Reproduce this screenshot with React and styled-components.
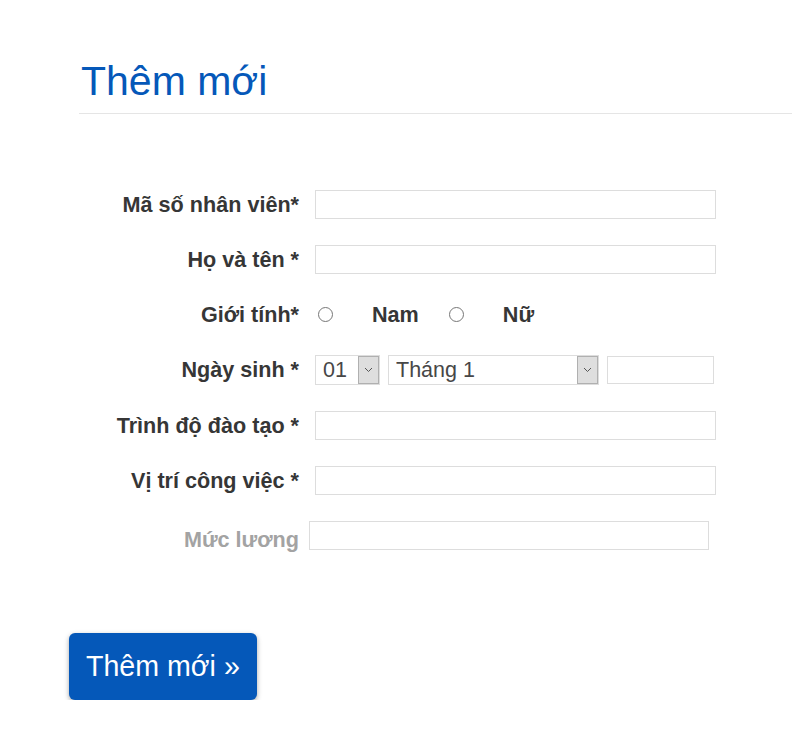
import React from "react";
import styled, { createGlobalStyle } from "styled-components";

const GlobalStyle = createGlobalStyle`
  html, body {
    margin: 0;
    padding: 0;
    background: #ffffff;
    font-family: "Liberation Sans", Arial, sans-serif;
  }
  * { box-sizing: border-box; }
`;

const Page = styled.div`
  padding-top: 58px;
  width: 792px;
  overflow: hidden;
`;

const Title = styled.h1`
  margin: 0 0 0 79px;
  padding: 0 0 8px 2px;
  font-size: 41px;
  font-weight: normal;
  line-height: normal;
  color: #0558b9;
  border-bottom: 1px solid #e5e5e5;
`;

const Form = styled.form`
  margin: 76px 0 0 79px;
  display: flex;
  flex-direction: column;
  gap: 26px;
`;

const Row = styled.div`
  display: grid;
  grid-template-columns: 220px auto;
  column-gap: ${(p) => p.$gap || 16}px;
  align-items: center;
  min-height: 29px;
`;

const Label = styled.label`
  text-align: right;
  font-size: 21.6px;
  font-weight: bold;
  color: ${(p) => (p.$muted ? "#a3a3a3" : "#363636")};
  white-space: nowrap;
  line-height: ${(p) => (p.$muted ? "20px" : "normal")};
  padding-top: ${(p) => (p.$muted ? 9 : 0)}px;
`;

const TextInput = styled.input`
  width: ${(p) => p.$width || 401}px;
  height: ${(p) => p.$height || 29}px;
  border: 1px solid #dddddd;
  background: #fff;
  font-family: inherit;
  font-size: 18px;
  padding: 0 6px;
  outline: none;
`;

const RadioGroup = styled.div`
  display: flex;
  align-items: center;
  gap: 30px;
  margin-left: 3px;
`;

const RadioOption = styled.label`
  display: flex;
  align-items: center;
  gap: 39px;
  font-size: 21.6px;
  font-weight: bold;
  color: #363636;
`;

const Radio = styled.input`
  width: 15px;
  height: 15px;
  margin: 0;
`;

const DateGroup = styled.div`
  display: flex;
  align-items: center;
  gap: 8px;
`;

const SelectBox = styled.div`
  display: flex;
  align-items: stretch;
  width: ${(p) => p.$width}px;
  height: 30px;
  border: 1px solid #dddddd;
  background: #fff;
`;

const NativeSelect = styled.select`
  appearance: none;
  -webkit-appearance: none;
  flex: 1;
  min-width: 0;
  border: none;
  background: transparent;
  font-family: inherit;
  font-size: 21.5px;
  color: #474747;
  padding: 0 0 0 7px;
  outline: none;
`;

const ArrowBox = styled.span`
  width: 21px;
  display: flex;
  align-items: center;
  justify-content: center;
  background: #dedede;
  border: 1px solid #b0b0b0;
  pointer-events: none;
`;

const ButtonBar = styled.div`
  padding: 83px 0 0 69px;
`;

const SubmitButton = styled.button`
  height: 67px;
  padding: 0 17px;
  border: none;
  border-radius: 6px;
  background: #0558b9;
  color: #ffffff;
  font-family: inherit;
  font-size: 28.6px;
  box-shadow: 0 2px 5px rgba(0, 0, 0, 0.35);
  cursor: pointer;
`;

const Chevron = () => (
  <svg width="9" height="6" viewBox="0 0 9 6">
    <path d="M1 1 L4.5 4.5 L8 1" fill="none" stroke="#555" strokeWidth="1" />
  </svg>
);

const Select = ({ width, options }) => (
  <SelectBox $width={width}>
    <NativeSelect defaultValue={options[0]}>
      {options.map((o) => (
        <option key={o}>{o}</option>
      ))}
    </NativeSelect>
    <ArrowBox>
      <Chevron />
    </ArrowBox>
  </SelectBox>
);

const days = Array.from({ length: 31 }, (_, i) => String(i + 1).padStart(2, "0"));
const months = Array.from({ length: 12 }, (_, i) => `Tháng ${i + 1}`);

export default function App() {
  return (
    <>
      <GlobalStyle />
      <Page>
        <Title>Thêm mới</Title>
        <Form onSubmit={(e) => e.preventDefault()}>
          <Row>
            <Label>Mã số nhân viên*</Label>
            <TextInput type="text" />
          </Row>
          <Row>
            <Label>Họ và tên *</Label>
            <TextInput type="text" />
          </Row>
          <Row>
            <Label>Giới tính*</Label>
            <RadioGroup>
              <RadioOption>
                <Radio type="radio" name="gender" />
                Nam
              </RadioOption>
              <RadioOption>
                <Radio type="radio" name="gender" />
                Nữ
              </RadioOption>
            </RadioGroup>
          </Row>
          <Row>
            <Label>Ngày sinh *</Label>
            <DateGroup>
              <Select width={65} options={days} />
              <Select width={211} options={months} />
              <TextInput type="text" $width={107} $height={28} />
            </DateGroup>
          </Row>
          <Row>
            <Label>Trình độ đào tạo *</Label>
            <TextInput type="text" />
          </Row>
          <Row>
            <Label>Vị trí công việc *</Label>
            <TextInput type="text" />
          </Row>
          <Row $gap={10}>
            <Label $muted>Mức lương</Label>
            <TextInput type="text" $width={400} />
          </Row>
        </Form>
        <ButtonBar>
          <SubmitButton type="button">Thêm mới »</SubmitButton>
        </ButtonBar>
      </Page>
    </>
  );
}
